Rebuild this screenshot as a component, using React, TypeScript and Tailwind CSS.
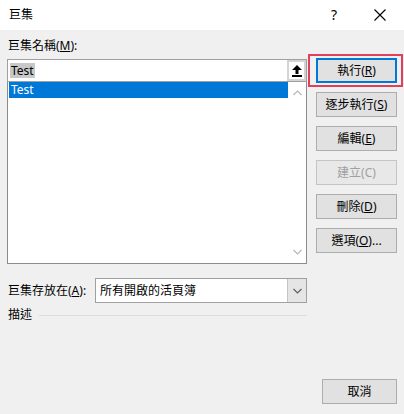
import React from "react";

const font = "font-['Noto_Sans','Noto_Sans_CJK_TC',sans-serif]";

function Btn({ children, disabled, primary }: { children: React.ReactNode; disabled?: boolean; primary?: boolean }) {
    return (
        <div
            className={`w-[81px] h-[25px] flex items-center justify-center text-[12px] leading-none bg-[#e1e1e1] ${
                primary
                    ? "border-2 border-[#0078d7]"
                    : disabled
                    ? "border border-[#c4c4c4] text-[#a0a0a0] bg-[#e8e8e8]"
                    : "border border-[#adadad] text-black"
            }`}
        >
            {children}
        </div>
    );
}

function UploadIcon() {
    return (
        <svg width="10" height="12" viewBox="0 0 10 12">
            <path d="M5 0 L10 5 L6.5 5 L6.5 9 L3.5 9 L3.5 5 L0 5 Z" fill="#000" />
            <rect x="0" y="10" width="10" height="2" fill="#000" />
        </svg>
    );
}

function Chevron({ up, color }: { up?: boolean; color: string }) {
    return (
        <svg width="9" height="6" viewBox="0 0 9 6">
            <path d={up ? "M0.5 5 L4.5 1 L8.5 5" : "M0.5 1 L4.5 5 L8.5 1"} stroke={color} strokeWidth="1.2" fill="none" />
        </svg>
    );
}

export default function App() {
    return (
        <div className={`w-[404px] h-[414px] bg-[#f0f0f0] text-black ${font} overflow-hidden`}>
            {/* Title bar */}
            <div className="h-[30px] bg-white flex items-center">
                <span className="ml-[9px] text-[12px] leading-none">巨集</span>
                <span className="ml-auto text-[14px] leading-none">?</span>
                <div className="ml-[37px] mr-[18px]">
                    <svg width="12" height="12" viewBox="0 0 12 12">
                        <path d="M0.5 0.5 L11.5 11.5 M11.5 0.5 L0.5 11.5" stroke="#000" strokeWidth="1.1" />
                    </svg>
                </div>
            </div>

            <div className="h-[384px] flex flex-col">
                <div className="flex">
                    {/* Left column */}
                    <div className="ml-[7px] w-[300px] pt-[8px]">
                        <div className="h-[16px] leading-[16px] text-[12px] ml-[1px]">
                            巨集名稱(<u>M</u>):
                        </div>
                        <div className="mt-[5px] h-[23px] border border-[#a0a0a0] bg-white flex items-center">
                            <span className="ml-[2px] bg-[#c8c8c8] px-[1px] text-[12px] leading-[15px]">Test</span>
                            <div className="ml-auto h-[21px] w-[19px] border-2 border-[#d4d4d4] bg-white flex items-center justify-center">
                                <UploadIcon />
                            </div>
                        </div>
                        <div className="h-[182px] border border-t-0 border-[#8c8c8c] bg-white flex">
                            <div className="flex-1 pl-[1px]">
                                <div className="h-[16px] bg-[#0078d7] text-white text-[12px] leading-[16px] pl-[2px]">Test</div>
                            </div>
                            <div className="w-[18px] flex flex-col items-center justify-between py-[8px]">
                                <Chevron up color="#b8b8b8" />
                                <Chevron color="#b8b8b8" />
                            </div>
                        </div>

                        <div className="mt-[14px] h-[25px] flex items-center">
                            <span className="ml-[1px] w-[87px] text-[12px] leading-none">
                                巨集存放在(<u>A</u>):
                            </span>
                            <div className="h-[25px] flex-1 border border-[#a0a0a0] bg-white flex items-center">
                                <span className="ml-[4px] text-[12px] leading-none">所有開啟的活頁簿</span>
                                <div className="ml-auto h-[23px] w-[19px] bg-[#e5e5e5] border-l border-[#c4c4c4] flex items-center justify-center">
                                    <Chevron color="#606060" />
                                </div>
                            </div>
                        </div>

                        <div className="mt-[4px] h-[16px] flex items-center">
                            <span className="ml-[1px] text-[12px] leading-none">描述</span>
                            <div className="ml-[7px] flex-1 h-px bg-[#dcdcdc]" />
                        </div>
                    </div>

                    {/* Right column */}
                    <div className="ml-[1px] w-[95px] pt-[24px] flex flex-col">
                        <div className="h-[33px] border-2 border-[#e0405e] flex items-center pl-[6px]">
                            <Btn primary>
                                執行(<u>R</u>)
                            </Btn>
                        </div>
                        <div className="mt-[5px] pl-[8px] flex flex-col gap-[9px]">
                            <Btn>
                                逐步執行(<u>S</u>)
                            </Btn>
                            <Btn>
                                編輯(<u>E</u>)
                            </Btn>
                            <Btn disabled>建立(C)</Btn>
                            <Btn>
                                刪除(<u>D</u>)
                            </Btn>
                            <Btn>
                                選項(<u>O</u>)...
                            </Btn>
                        </div>
                    </div>
                </div>

                <div className="flex-1" />
                <div className="flex justify-end pr-[7px] pb-[10px]">
                    <div className="w-[75px] h-[25px] border border-[#adadad] bg-[#e1e1e1] flex items-center justify-center text-[12px] leading-none">
                        取消
                    </div>
                </div>
            </div>
        </div>
    );
}
